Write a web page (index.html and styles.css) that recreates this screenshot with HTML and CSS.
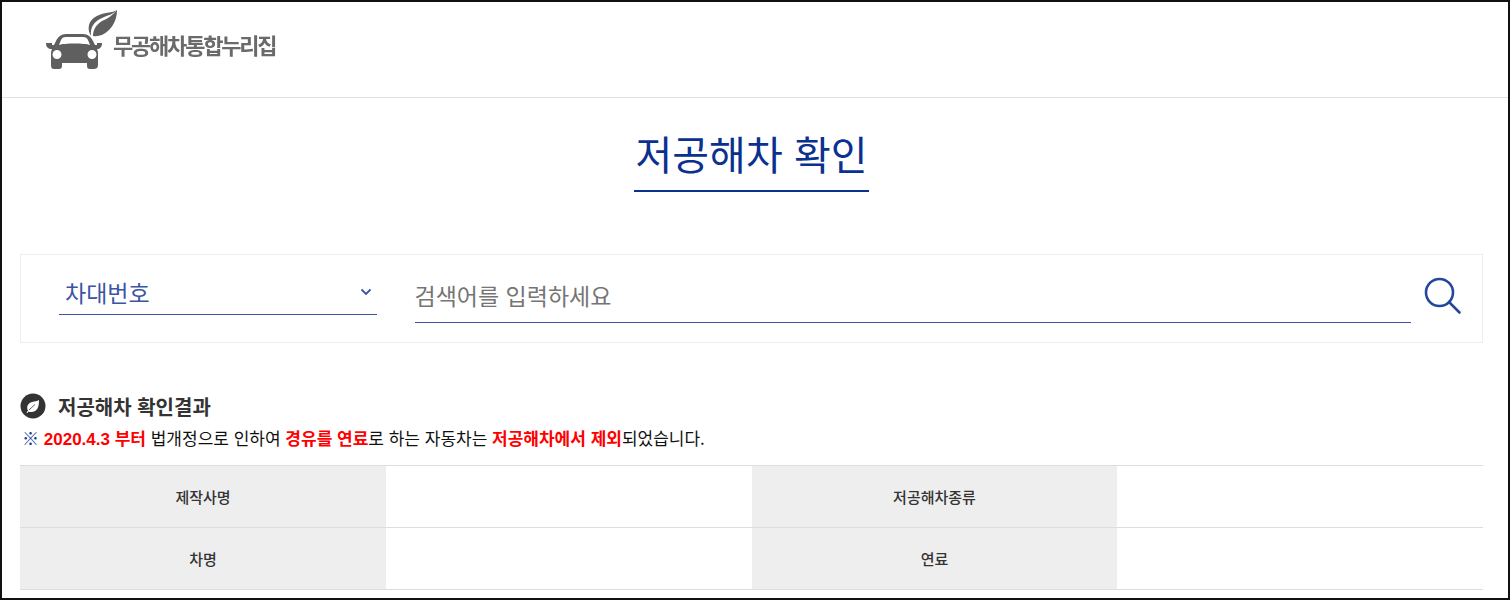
FILE: index.html
```html
<!DOCTYPE html>
<html lang="ko">
<head>
<meta charset="utf-8">
<title>저공해차 확인</title>
<link rel="stylesheet" href="styles.css">
</head>
<body>
<div class="frame">
  <header class="header">
    <div class="logo">
      <svg class="logo-icon" width="76" height="64" viewBox="0 0 76 64" aria-hidden="true">
        <path fill="#5f5f5f" d="M75 4C72 8 66 9 60 12C53 15 48 20 49 30C47 27 46 23 47 19C49 11 58 8 64 7C68 6 72 6 75 4Z"/>
        <path fill="#5f5f5f" d="M75 4C75 12 72 19 67 24C62 29 56 31 51 30C51 23 55 18 60 15C65 13 71 9 75 4Z"/>
        <path fill="#5f5f5f" fill-rule="evenodd" d="M14 35C16 31 19 28 24 28H41C46 28 49 31 51 35L53 39H55V37H60C60 41 58 43 55 43C56 45 56 47 56 49V59C56 62 54 63 52 63H48C46 63 45 62 45 60V57H20V60C20 62 19 63 17 63H12C10 63 9 62 9 59V49C9 47 9 45 10 43C6 43 4 41 4 37H10V39H12ZM17 39C22 37 43 37 48 39L46 34C45 32 44 31 41 31H24C21 31 20 32 19 34ZM15 44A4.500 4.500 0 1 0 15.010 53A4.500 4.500 0 1 0 15 44ZM50 44A4.500 4.500 0 1 0 50.010 53A4.500 4.500 0 1 0 50 44Z"/>
      </svg>
      <span class="logo-text">무공해차통합누리집</span>
    </div>
  </header>
  <main class="content">
    <div class="title-wrap"><h1 class="title">저공해차 확인</h1></div>
    <form class="search">
      <div class="select">
        <span>차대번호</span>
        <svg width="12" height="8" viewBox="0 0 12 8" aria-hidden="true"><path d="M1.500 1.500L6 6L10.500 1.500" fill="none" stroke="#3a55a5" stroke-width="1.800"/></svg>
      </div>
      <div class="field">검색어를 입력하세요</div>
      <svg class="search-icon" width="38" height="38" viewBox="0 0 38 38" aria-hidden="true">
        <circle cx="15.500" cy="15.500" r="13.500" fill="none" stroke="#24479d" stroke-width="2.600"/>
        <path d="M25 25L35.500 35.500" fill="none" stroke="#24479d" stroke-width="2.600" stroke-linecap="round"/>
      </svg>
    </form>
    <h2 class="section-title">
      <svg width="26" height="26" viewBox="0 0 26 26" aria-hidden="true">
        <circle cx="13" cy="13" r="12.500" fill="#333"/>
        <path fill="#fff" d="M19 7C19 13 18 19 11 19C10 19 9 19 8.500 18.500L7.500 20L6.500 19.500L8 17.500C6 14 8 10 12 9C15 8.500 17 8 19 7Z"/>
        <path d="M9 17L15 11.500" stroke="#333" stroke-width="0.800"/>
      </svg>
      <span>저공해차 확인결과</span>
    </h2>
    <p class="notice"><span class="mark">※</span> <b>2020.4.3 부터</b> 법개정으로 인하여 <b>경유를 연료</b>로 하는 자동차는 <b>저공해차에서 제외</b>되었습니다.</p>
    <div class="result">
      <div class="label">제작사명</div><div class="value"></div>
      <div class="label">저공해차종류</div><div class="value"></div>
      <div class="label">차명</div><div class="value"></div>
      <div class="label">연료</div><div class="value"></div>
    </div>
  </main>
</div>
</body>
</html>
```
FILE: styles.css
```css
* { box-sizing: border-box; }
html, body { margin: 0; padding: 0; background: #fff; }
body { font-family: "Noto Sans CJK KR", "Liberation Sans", sans-serif; color: #333; }
.frame { width: 1510px; height: 600px; border: 2px solid #111; overflow: hidden; background: #fff; }
.header { height: 96px; border-bottom: 1px solid #e2e2e2; }
.logo { display: flex; align-items: center; padding: 2px 0 0 40px; height: 70px; }
.logo-icon { display: block; flex: none; }
.logo-text { margin: 12px 0 0 -5px; font-size: 22px; font-weight: 700; letter-spacing: -2.200px; color: #6a6a6a; white-space: nowrap; filter: blur(0.4px); }
.content { padding: 0 25px 0 18px; }
.title-wrap { display: flex; justify-content: center; padding-top: 26px; }
.title { margin: 0; width: 235px; height: 68px; border-bottom: 2px solid #0b3190; font-size: 40px; font-weight: 400; line-height: 58px; text-align: center; color: #0b3190; white-space: nowrap; }
.search { display: flex; align-items: flex-start; margin-top: 62px; height: 89px; border: 1px solid #eee; padding: 0 20px 0 38px; }
.select { display: flex; align-items: center; justify-content: space-between; width: 318px; height: 45px; margin-top: 15px; padding: 0 5px 0 6px; border-bottom: 1px solid #3a55a5; font-size: 23px; color: #3a55a5; }
.field { width: 998px; height: 53px; margin: 15px 0 0 38px; border-bottom: 1px solid #3a55a5; font-size: 23px; line-height: 50px; color: #757575; }
.search-icon { margin: 22px 0 0 13px; flex: none; }
.section-title { display: flex; align-items: center; gap: 12px; margin: 48px 0 0; height: 30px; font-size: 20px; font-weight: 700; color: #333; }
.section-title svg { flex: none; }
.notice { margin: 5px 0 0 2px; height: 24px; font-size: 17px; line-height: 24px; color: #111; white-space: nowrap; }
.notice b { color: #f00; font-family: "Liberation Sans", "Noto Sans CJK KR", sans-serif; }
.mark { color: #123d9a; }
.result { display: grid; grid-template-columns: 366px 366px 365px 366px; margin-top: 15px; border-top: 1px solid #ddd; }
.label, .value { height: 62px; border-bottom: 1px solid #ddd; }
.label { display: flex; align-items: center; justify-content: center; background: #eee; font-size: 15px; font-weight: 500; color: #333; }
```
